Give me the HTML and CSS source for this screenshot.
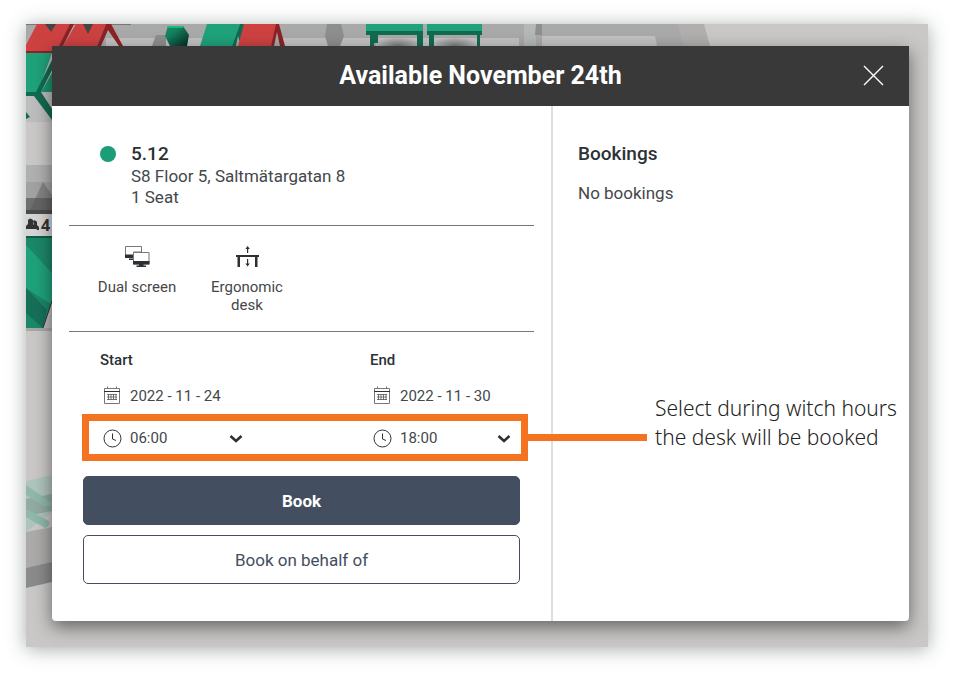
FILE: index.html
```html
<!DOCTYPE html>
<html lang="en">
	<head>
		<meta charset="utf-8">
		<title>Available November 24th</title>
		<link rel="stylesheet" href="styles.css">
	</head>
	<body>
		<main class="stage">
			<!-- office floor behind the dialog -->
			<svg class="floor" viewBox="26 24 902 623" preserveAspectRatio="xMinYMin slice" aria-hidden="true">
				<defs>
					<radialGradient id="shade">
						<stop offset="0" stop-color="#777"/>
						<stop offset="1" stop-color="#777" stop-opacity="0"/>
					</radialGradient>
					<linearGradient id="chair" x2="1" y2="1">
						<stop offset=".3" stop-color="#148463"/>
						<stop offset="1" stop-color="#06291f"/>
					</linearGradient>
				</defs>
				<rect x="26" y="24" width="902" height="623" fill="#c9c8c6"/>
				<path d="M26 24H702L710 46H26Z" fill="#a9a9a9"/>
				<path d="M106 38H202V46H106ZM282 38H370V46H282ZM376 38H519V46H376ZM542 36H655L657 46H542Z" fill="#c2c2c2"/>
				<path d="M678 24H704L710 46H683Z" fill="#b0afad"/>
				<path d="M524 24H536V46H524Z" fill="#b5b8b8"/>
				<path d="M536 24H542V35H535ZM156 35H166V46H152ZM327 24H341L344 36 340 46H328L325 36Z" fill="#8e8e8e"/>
				<path d="M26 24H131V25H26Z" fill="#777"/>
				<path d="M26 52H52V122H26Z" fill="#bdbdbd"/>
				<path d="M37 24H74L60 51H26V45Z" fill="#cd4241"/>
				<path d="M70 24H74L63 46H59ZM26 51H60V53H26Z" fill="#8b2226"/>
				<path d="M76 24H106L97 46H63Z" fill="#cd4241"/>
				<path d="M45 24H56L51 32ZM83 24H93L88 34Z" fill="#444"/>
				<path d="M106 24H111L123 46H119L108 30 101 46H97Z" fill="#8b2226"/>
				<path d="M26 53H52L38 92H26Z" fill="#1fa27a"/>
				<path d="M52 60V70L41 92 52 109V120L34 96H26V92H36ZM26 112L30 117 26 119Z" fill="#116b50"/>
				<path d="M52 73V92H41Z" fill="#18956e"/>
				<path d="M168 26H183L189 35 187 46H170L165 36Z" fill="url(#chair)"/>
				<path d="M168 26H183V28H167Z" fill="#1fb386"/>
				<path d="M207 24H240L232 46H200Z" fill="#1fa27a"/>
				<path d="M240 24H244L241 46 238 36 236 46H232Z" fill="#116b50"/>
				<path d="M244 24H278L271 46H238Z" fill="#cd4241"/>
				<path d="M276 24H279L285 46H280L277 32 274 46H271Z" fill="#8b2226"/>
				<ellipse cx="398" cy="46" rx="24" ry="9" fill="url(#shade)"/>
				<ellipse cx="455" cy="46" rx="24" ry="9" fill="url(#shade)"/>
				<path d="M366 24H423V31H366ZM427 24H482V31H427Z" fill="#1fa27a"/>
				<path d="M366 31H423V46H417V35H378V43H374V46H370V35H366ZM427 31H482V35H480V46H477V35H434V46H429V35H427Z" fill="#116b50"/>
				<path d="M26 165H52V213H26Z" fill="#b0b0b0"/>
				<path d="M26 182H52V198H26Z" fill="#a2a2a2"/>
				<path d="M26 198H52V210H26Z" fill="#6f6f6f"/>
				<path d="M30 210L43 182 52 195V210Z" fill="#555" opacity=".4"/>
				<path d="M26 210H52V214H26Z" fill="#4b4b4b"/>
				<path d="M26 214H52V236H26Z" fill="#d5d5d5"/>
				<path d="M26 229V226L28 224V220Q30 217 33 220V224L36 227V229ZM33 221Q35 219 37 222V225L39 227V230H37L34 225Z" fill="#333"/>
				<text class="floor-label" x="41" y="231">4</text>
				<path d="M26 236H52V328H26Z" fill="#1c8769"/>
				<path d="M26 236H52V238H26Z" fill="#0f5e47"/>
				<path d="M26 245L52 273V305L26 288Z" fill="#1fa27a"/>
				<path d="M26 288L47 310 43 328 26 313Z" fill="#15705a"/>
				<path d="M52 301V328H43Z" fill="#bbb"/>
				<path d="M43 328L52 301" stroke="#333" fill="none"/>
				<path d="M26 328H52V331H26Z" fill="#a8a8a8"/>
				<path d="M26 481L52 475V512L26 532Z" fill="#afc4bc"/>
				<path d="M26 499L52 494V511L26 516Z" fill="#92aba3"/>
				<path d="M26 485L52 503V506H44L26 495ZM26 509L49 521Q50 527 45 528L26 517Z" fill="#8fb9ab"/>
				<path d="M26 532L52 527V563L26 568Z" fill="#acabaa"/>
				<path d="M26 568L52 562V582L26 588Z" fill="#8a8b8a"/>
			</svg>

			<section class="modal" role="dialog" aria-labelledby="modal-title">
				<header class="modal-header">
					<h1 id="modal-title">Available November 24th</h1>
					<button class="close" type="button" aria-label="Close">
						<svg width="22" height="22" viewBox="0 0 22 22"><path d="M1 1L20 20M20 1L1 20" stroke="#fff" stroke-width="1.4" fill="none"/></svg>
					</button>
				</header>

				<div class="modal-body">
					<form class="booking">
						<div class="desk">
							<span class="status"></span>
							<div>
								<h2>5.12</h2>
								<p>S8 Floor 5, Saltmätargatan 8</p>
								<p>1 Seat</p>
							</div>
						</div>

						<ul class="features">
							<li>
								<svg width="26" height="22" viewBox="0 0 26 22">
									<path d="M1.500.5H17.500V6H9.500V11.500H1.500Z" fill="#fff" stroke="#777"/>
									<path d="M1 8.500H9V12H1ZM5 12.500H9V14H5Z" fill="#2c3134"/>
									<path d="M9.500 6.500H25V18H9.500Z" fill="#fff" stroke="#777"/>
									<path d="M9 15H25.500V18.500H9ZM15 18.500H19.500V19.500H22V21H12.500V19.500H15Z" fill="#2c3134"/>
								</svg>
								<span>Dual screen</span>
							</li>
							<li>
								<svg width="26" height="22" viewBox="0 0 26 22">
									<path d="M2 9H25V11H23.500V21H21V11H6V21H3.500V11H2ZM13 2H14.200V7H13ZM13 13H14.200V18H13Z" fill="#2c3134"/>
									<path d="M13.600 0L15.800 3H11.400ZM13.600 20.500L11.400 17.500H15.800Z" fill="#2c3134"/>
								</svg>
								<span>Ergonomic desk</span>
							</li>
						</ul>

						<div class="schedule">
							<div class="dates">
								<div>
									<label for="start-date">Start</label>
									<div class="field">
										<svg class="icon" width="20" height="20" viewBox="0 0 20 20"><use href="#calendar"/></svg>
										<input id="start-date" type="text" value="2022 - 11 - 24">
									</div>
								</div>
								<div>
									<label for="end-date">End</label>
									<div class="field">
										<svg class="icon" width="20" height="20" viewBox="0 0 20 20"><use href="#calendar"/></svg>
										<input id="end-date" type="text" value="2022 - 11 - 30">
									</div>
								</div>
							</div>

							<div class="hours">
								<div class="field">
									<svg class="icon" width="20" height="20" viewBox="0 0 20 20"><use href="#clock"/></svg>
									<select aria-label="Start time"><option>06:00</option><option>07:00</option><option>08:00</option></select>
									<svg class="chevron" width="14" height="10" viewBox="0 0 14 10"><use href="#chevron"/></svg>
								</div>
								<div class="field">
									<svg class="icon" width="20" height="20" viewBox="0 0 20 20"><use href="#clock"/></svg>
									<select aria-label="End time"><option>18:00</option><option>17:00</option><option>16:00</option></select>
									<svg class="chevron" width="14" height="10" viewBox="0 0 14 10"><use href="#chevron"/></svg>
								</div>
								<div class="callout">
									<span class="callout-line"></span>
									<p>Select during witch hours<br>the desk will be booked</p>
								</div>
							</div>

							<div class="actions">
								<button class="primary" type="button">Book</button>
								<button class="secondary" type="button">Book on behalf of</button>
							</div>
						</div>
					</form>

					<aside class="bookings">
						<h2>Bookings</h2>
						<p>No bookings</p>
					</aside>
				</div>
			</section>
		</main>

		<svg class="symbols" aria-hidden="true">
			<symbol id="calendar" viewBox="0 0 20 20">
				<path d="M2.500 2.500H17.500V17.500H2.500ZM5.500.5V3M14.500.5V3" fill="none" stroke="#777"/>
				<path d="M2 5.500H18" stroke="#2c3134"/>
				<path d="M5 8.500H15M5 11H15M5 13.500H15M6.500 8V14M9 8V14M11.500 8V14M14 8V14" fill="none" stroke="#555" stroke-width=".8"/>
			</symbol>
			<symbol id="clock" viewBox="0 0 20 20">
				<circle cx="10.500" cy="10.500" r="8.500" fill="none" stroke="#2c3134"/>
				<path d="M10.500 5.500V11L14 12.500" fill="none" stroke="#2c3134"/>
			</symbol>
			<symbol id="chevron" viewBox="0 0 14 10">
				<path d="M1.500 3L7 8L12.500 3" fill="none" stroke="#2c3134" stroke-width="2.600"/>
			</symbol>
		</svg>
	</body>
</html>
```

FILE: styles.css
```css
* {
	box-sizing: border-box;
	margin: 0; padding: 0;
}

body {
	padding: 24px 27px 30px 26px;
	background: #fff;
	color: #43484b;
	font-family: "Roboto", sans-serif;
	font-size: 16px;
}

.stage {
	position: relative;
	padding: 22px 19px 26px 26px;
	background: #c9c8c6;
	box-shadow: 0 2px 18px rgba(50, 70, 65, 0.45);
}

.floor {
	position: absolute;
	top: 0; left: 0;
	width: 100%;
	height: 100%;
}

.floor-label {
	font-family: "Open Sans", sans-serif;
	font-size: 16px;
	font-weight: 700;
	fill: #333;
}

.symbols {
	display: none;
}

.modal {
	position: relative;
	background: #fff;
	border-radius: 0 0 4px 4px;
	box-shadow: 0 6px 18px rgba(0, 0, 0, 0.5);
}

.modal-header {
	display: grid;
	grid-template-columns: 70px 1fr 70px;
	align-items: center;
	height: 60px;
	background: #393939;
	color: #fff;
}

.modal-header h1 {
	grid-column: 2;
	font-size: 25px;
	font-weight: 700;
	line-height: 30px;
	text-align: center;
}

button {
	font-family: "Roboto", sans-serif;
	cursor: pointer;
}

.close {
	display: flex;
	justify-content: center;
	align-items: center;
	height: 40px;
	background: none;
	border: none;
}

.modal-body {
	display: grid;
	grid-template-columns: 501fr 356fr;
}

.booking {
	padding: 0 17px;
	border-right: solid 2px #dedede;
}

h2 {
	color: #2c3134;
	font-size: 19px;
	font-weight: 500;
	line-height: 24px;
}

.desk {
	display: flex;
	gap: 15px;
	padding: 36px 0 17px 31px;
	border-bottom: solid 1px #777;
}

.desk p {
	font-size: 17px;
	line-height: 21px;
}

.status {
	width: 16px;
	height: 16px;
	margin-top: 4px;
	border-radius: 50%;
	background: #1b9e77;
}

.features {
	display: flex;
	gap: 26px;
	padding: 20px 0 17px 26px;
	border-bottom: solid 1px #777;
	list-style: none;
}

.features li {
	display: flex;
	flex-direction: column;
	align-items: center;
	gap: 10px;
	width: 84px;
	font-size: 15px;
	line-height: 18px;
	text-align: center;
}

.schedule {
	padding: 18px 6px 37px 13px;
}

.dates, .hours {
	display: grid;
	grid-template-columns: 270px 1fr;
}

.dates {
	padding-left: 18px;
}

.dates label {
	display: block;
	margin-bottom: 16px;
	color: #2c3134;
	font-size: 15px;
	font-weight: 500;
	line-height: 20px;
}

.field {
	position: relative;
	display: flex;
	align-items: center;
	gap: 8px;
	max-width: 143px;
	height: 20px;
}

.icon {
	flex: none;
	margin-left: 2px;
}

input, select {
	flex: 1;
	min-width: 0;
	height: 20px;
	border: none;
	background: none;
	color: inherit;
	font-family: inherit;
	font-size: 15px;
	appearance: none;
}

.chevron {
	position: absolute;
	right: 0;
	pointer-events: none;
}

.hours {
	position: relative;
	align-items: center;
	height: 47px;
	margin: 8px 0 15px;
	padding: 0 10px 0 11px;
	border: solid 7px #f47321;
}

.callout {
	position: absolute;
	bottom: 2px;
	left: 100%;
	display: flex;
	align-items: flex-end;
	gap: 8px;
	margin-left: 7px;
}

.callout-line {
	width: 119px;
	height: 7px;
	margin-bottom: 11px;
	background: #f47321;
}

.callout p {
	color: #222;
	font-family: "Noto Sans", sans-serif;
	font-size: 21px;
	font-weight: 300;
	line-height: 29px;
	white-space: nowrap;
}

.actions {
	display: grid;
	gap: 10px;
	padding: 0 8px 0 1px;
}

.actions button {
	height: 49px;
	border: solid 1px #434e61;
	border-radius: 5px;
	font-size: 17px;
}

.actions .primary {
	background: #434e61;
	color: #fff;
	font-weight: 700;
}

.actions .secondary {
	background: #fff;
	color: #434e61;
}

.bookings {
	padding: 36px 25px;
}

.bookings p {
	margin-top: 17px;
	font-size: 17px;
	line-height: 21px;
}
```
